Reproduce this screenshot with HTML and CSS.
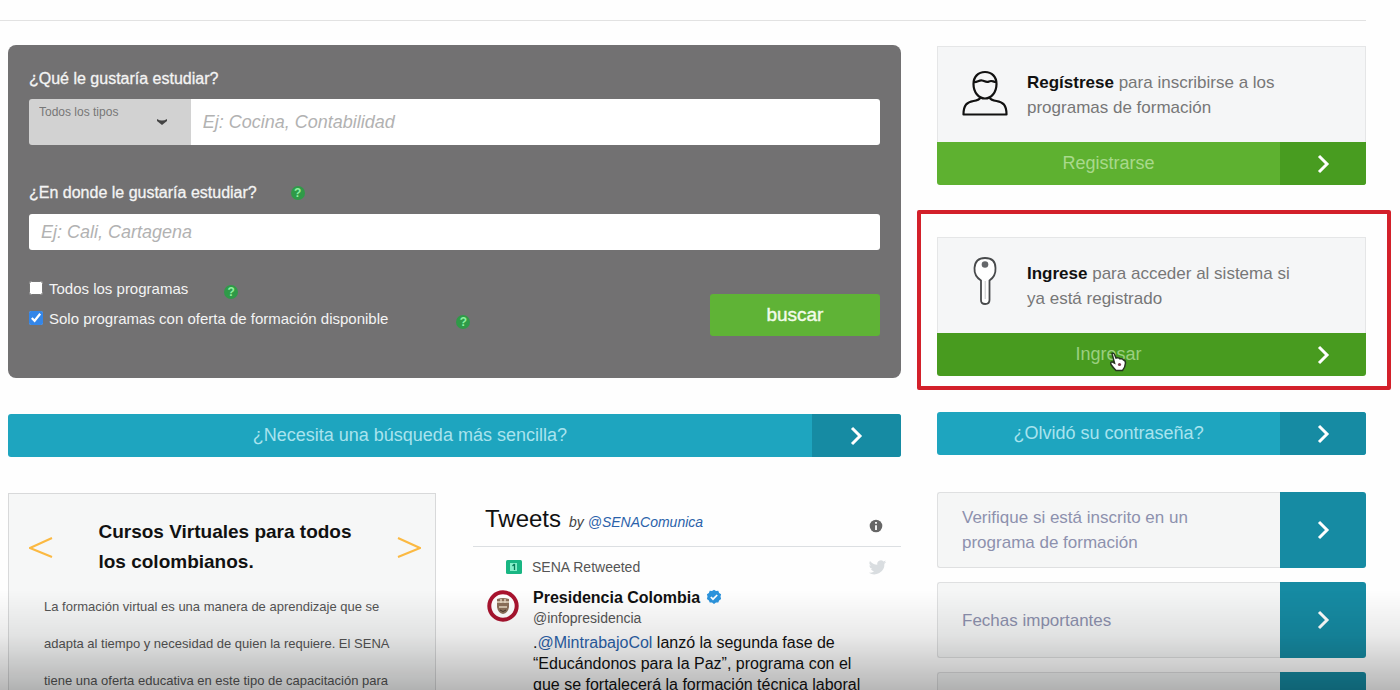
FILE: index.html
```html
<!DOCTYPE html>
<html lang="es">
<head>
<meta charset="utf-8">
<meta name="viewport" content="width=device-width, initial-scale=1">
<title>SENA Sofia Plus</title>
<link rel="stylesheet" href="styles.css">
</head>
<body>
<svg class="defs" aria-hidden="true"><symbol id="chev" viewBox="0 0 16 22"><path d="M4 3 L12 11 L4 19" fill="none" stroke="currentColor" stroke-width="3"/></symbol></svg>
<header class="top"></header>
<main class="layout">
  <div class="main">
    <form class="search">
      <label class="title" for="que">¿Qué le gustaría estudiar?</label>
      <div class="combo">
        <span class="picker">
          <select aria-label="Tipo de programa"><option>Todos los tipos</option></select>
          <svg class="caret" viewBox="0 0 12 8"><path d="M1 1 Q6 4 11 1 L11 3 L6 7 L1 3Z" fill="#444"/></svg>
        </span>
        <input class="field" id="que" type="text" placeholder="Ej: Cocina, Contabilidad">
      </div>
      <div class="title-row"><label class="title" for="donde">¿En donde le gustaría estudiar?</label><button class="help" type="button">?</button></div>
      <input class="field place" id="donde" type="text" placeholder="Ej: Cali, Cartagena">
      <div class="bottom">
        <div class="checks">
          <div class="check"><input type="checkbox" id="todos"><label for="todos">Todos los programas</label><button class="help" type="button">?</button></div>
          <div class="check far"><input type="checkbox" id="solo" checked><label for="solo">Solo programas con oferta de formación disponible</label><button class="help" type="button">?</button></div>
        </div>
        <button class="submit" type="submit">buscar</button>
      </div>
    </form>
    <a class="bar teal wide" href="#"><span class="bar-text">¿Necesita una búsqueda más sencilla?</span><span class="bar-arrow"><svg class="chev"><use href="#chev"/></svg></span></a>
    <div class="split">
      <section class="course">
        <div class="course-head">
          <button class="nav" type="button" aria-label="Anterior"><svg viewBox="0 0 24 22"><path d="M23 1 L1 11 L23 20" fill="none" stroke="#fbb942" stroke-width="2"/></svg></button>
          <h2>Cursos Virtuales para todos<br>los colombianos.</h2>
          <button class="nav" type="button" aria-label="Siguiente"><svg viewBox="0 0 24 22"><path d="M1 1 L23 11 L1 20" fill="none" stroke="#fbb942" stroke-width="2"/></svg></button>
        </div>
        <p>La formación virtual es una manera de aprendizaje que se<br>adapta al tiempo y necesidad de quien la requiere. El SENA<br>tiene una oferta educativa en este tipo de capacitación para</p>
      </section>
      <section class="tweets">
        <div class="tweets-head"><h2>Tweets</h2><span class="by">by <a href="#">@SENAComunica</a></span>
          <svg class="info" viewBox="0 0 14 14"><circle cx="7" cy="7" r="6.3" fill="#666"/><path d="M7 6.2V11M7 3V4.8" stroke="#fff" stroke-width="1.8"/></svg></div>
        <div class="retweet">
          <svg class="rt" viewBox="0 0 16 14"><rect width="16" height="14" rx="1.5" fill="#19b683"/><path d="M4 3h7v8H4z" fill="#85efc9"/><path d="M8.500 4v6M6.500 6l2-2" stroke="#087a58" stroke-width="1.3" fill="none"/></svg>
          <span>SENA Retweeted</span>
          <svg class="bird" viewBox="0 0 24 24"><path fill="#d9dde0" d="M23 5a9 9 0 0 1-2.6.7 4.5 4.5 0 0 0 2-2.5 9 9 0 0 1-2.9 1.1 4.5 4.5 0 0 0-7.7 4.1A12.8 12.8 0 0 1 2.5 3.7a4.5 4.5 0 0 0 1.4 6 4.5 4.5 0 0 1-2-.6 4.5 4.5 0 0 0 3.6 4.5 4.5 4.5 0 0 1-2 .1 4.5 4.5 0 0 0 4.2 3.1A9 9 0 0 1 1 18.700a12.8 12.8 0 0 0 19.700-11.4A9 9 0 0 0 23 5z"/></svg>
        </div>
        <article class="tweet">
          <svg class="avatar" viewBox="0 0 32 32"><circle cx="16" cy="16" r="13.7" fill="#fff" stroke="#a9142f" stroke-width="4"/><path d="M10 9q6-2 12 0v8q-1 6-6 7q-5-1-6-7z" fill="#8b705a"/><path d="M10 12h12M12 17h8M14 9v4M18 9v4" stroke="#e8d9c4" stroke-width="1.4"/><path d="M13 20q3 3 6 0" stroke="#45352b" fill="none"/></svg>
          <div>
            <div class="name"><strong>Presidencia Colombia</strong><svg class="verified" viewBox="0 0 16 16"><path d="M8 .8l2 1.2 2.3-.2.8 2.1 2 1.3-.6 2.4.6 2.5-2 1.3-.8 2.2-2.3-.2-2 1.500-2-1.500-2.300.2-.8-2.200-2-1.300.6-2.500L.9 5.200l2-1.300.8-2.100L6 2z" fill="#2c94dd"/><path d="M4.8 8l2.2 2.2 4.2-4.2" fill="none" stroke="#fff" stroke-width="1.7"/></svg></div>
            <div class="handle">@infopresidencia</div>
            <p>.<a href="#">@MintrabajoCol</a> lanzó la segunda fase de<br>“Educándonos para la Paz”, programa con el<br>que se fortalecerá la formación técnica laboral</p>
          </div>
        </article>
      </section>
    </div>
  </div>
  <aside class="side">
    <section class="access">
      <div class="access-body">
        <svg class="glyph" viewBox="0 0 46 48"><g fill="none" stroke="#111" stroke-width="2.2" stroke-linejoin="round"><path d="M23 2c-7 0-11.500 5-11.500 12 0 8 5 14.500 11.500 14.500S34.500 22 34.500 14C34.500 7 30 2 23 2z"/><path d="M12 12c3 .5 5-2 8-1.500 3 .5 4 2.500 7 1 3-1.500 4 .5 7 .5"/><path d="M18.500 27.500c-1 2-3 3-7 3.500C5 32 1.500 35 1.500 44.500h43C44.500 35 41 32 34.500 31c-4-.5-6-1.500-7-3.500"/></g></svg>
        <p><strong>Regístrese</strong> para inscribirse a los<br>programas de formación</p>
      </div>
      <a class="bar green" href="#"><span class="bar-text">Registrarse</span><span class="bar-arrow"><svg class="chev"><use href="#chev"/></svg></span></a>
    </section>
    <section class="access marked">
      <div class="access-body">
        <svg class="glyph" viewBox="0 0 46 48"><path d="M19 23.500Q12 19 12.500 11C13 4 17 1 23 1s10.500 3 10.500 10Q34 19 27.500 23.500V43q0 4-4.300 4T19 43z" fill="#fff" stroke="#484a4c" stroke-width="1.8"/><path d="M23.200 24v18" stroke="#c5c7c9"/><circle cx="23" cy="7.500" r="3.300" fill="#65676a"/></svg>
        <p><strong>Ingrese</strong> para acceder al sistema si<br>ya está registrado</p>
      </div>
      <a class="bar green active" href="#"><span class="bar-text">Ingresar</span><span class="bar-arrow"><svg class="chev"><use href="#chev"/></svg></span></a>
      <svg class="pointer" viewBox="0 0 18 20"><path d="M3 1.500q2-1 3 2l1 2.500q3-1 4 .8 3-.5 3.500 1.200 2 .2 2 3-.3 4.500-3 7.500H7q-3-3-5-6-1-3 1.500-2.500l2 1z" fill="#fff" stroke="#26351f" stroke-width="1.5"/><circle cx="10.500" cy="12.500" r="1.600" fill="#7c4050"/></svg>
    </section>
    <a class="bar teal forgot" href="#"><span class="bar-text">¿Olvidó su contraseña?</span><span class="bar-arrow"><svg class="chev"><use href="#chev"/></svg></span></a>
    <nav class="links">
      <a class="link" href="#"><span class="link-text">Verifique si está inscrito en un<br>programa de formación</span><span class="link-arrow"><svg class="chev"><use href="#chev"/></svg></span></a>
      <a class="link" href="#"><span class="link-text">Fechas importantes</span><span class="link-arrow"><svg class="chev"><use href="#chev"/></svg></span></a>
      <a class="link" href="#" aria-label="Más información"><span class="link-text"></span><span class="link-arrow"></span></a>
    </nav>
  </aside>
</main>
<div class="shade"></div>
</body>
</html>
```
FILE: styles.css
```css
* { box-sizing: border-box; }
body {
  margin: 0;
  height: 100vh;
  overflow: hidden;
  padding: 0 34px 0 8px;
  background: #fefefe;
  font-family: "Liberation Sans", Arial, sans-serif;
  color: #111;
}
a { text-decoration: none; }
p, h2 { margin: 0; }
button, input, select { font: inherit; margin: 0; }
button { border: 0; padding: 0; background: none; cursor: pointer; }
svg { display: block; flex: none; }
.defs { position: absolute; width: 0; height: 0; }
.top { height: 21px; margin-left: -8px; border-bottom: 1px solid #e2e2e2; }
.layout { display: grid; grid-template-columns: 893fr 429fr; gap: 36px; padding-top: 24px; }

.search { background: #727172; border-radius: 8px; padding: 22px 21px 42px; color: #f4f4f4; }
.title { display: block; font-size: 16px; line-height: 24px; -webkit-text-stroke: 0.3px currentColor; }
.combo { display: flex; height: 46px; margin: 8px 0 36px; }
.picker { position: relative; flex: 0 0 19%; }
.picker select {
  appearance: none;
  width: 100%;
  height: 100%;
  border: 0;
  border-radius: 3px 0 0 3px;
  background: #d2d2d2;
  color: #777;
  font-size: 12px;
  padding: 0 30px 20px 10px;
}
.caret { position: absolute; right: 23px; top: 19px; width: 12px; height: 8px; }
.field {
  flex: 1;
  width: 100%;
  min-width: 0;
  border: 0;
  border-radius: 0 3px 3px 0;
  background: #fff;
  padding: 0 12px;
  font-size: 18px;
}
.field::placeholder { color: #b2b2b2; font-style: italic; opacity: 1; }
.place { display: block; height: 36px; border-radius: 3px; margin-top: 9px; }
.title-row { display: flex; align-items: center; gap: 34px; }
.help {
  width: 14px;
  height: 14px;
  border-radius: 50%;
  background: #2f9a48;
  color: #8df0a0;
  font-size: 12px;
  line-height: 14px;
  font-weight: bold;
}
.bottom { display: flex; justify-content: space-between; align-items: flex-start; margin-top: 24px; }
.checks { display: grid; gap: 2px; }
.check { display: flex; align-items: center; height: 28px; font-size: 15px; }
.check input { width: 14px; height: 14px; margin-right: 6px; accent-color: #3486e8; }
.check .help { margin: 8px 0 0 36px; }
.check.far .help { margin-left: 68px; }
.submit {
  width: 20%;
  height: 42px;
  margin-top: 20px;
  border-radius: 3px;
  background: #5fb336;
  color: #f2fbea;
  font-size: 19px;
  -webkit-text-stroke: 0.4px currentColor;
}

.bar { display: flex; height: 43px; border-radius: 3px; overflow: hidden; font-size: 18px; }
.bar-text { flex: 1; display: grid; place-items: center; }
.bar-arrow { flex: 0 0 20%; display: grid; place-items: center; color: #fff; }
.chev { width: 16px; height: 22px; }
.teal { background: #1ea5bf; color: #a9e3ee; }
.teal .bar-arrow { background: #168ba3; }
.wide { margin: 36px 0; }
.wide .bar-arrow { flex-basis: 10%; }
.green { background: #5eb130; color: #a9d98c; border-radius: 0 0 3px 3px; }
.green .bar-arrow { background: #489c20; }
.green.active { background: #489b1f; color: #9bcf80; }
.green.active .bar-arrow { background: none; }

.split { display: grid; grid-template-columns: 1fr 1fr; gap: 37px; }
.course { border: 1px solid #d8d9da; background: #f6f7f7; padding: 23px 14px 40px 20px; min-height: 320px; }
.course-head { display: flex; justify-content: space-between; }
.course-head h2 { font-size: 19px; line-height: 30px; white-space: nowrap; }
.nav { flex: none; width: 24px; padding-top: 1px; }
.nav svg { width: 24px; height: 22px; }
.course p { font-size: 13px; line-height: 37px; color: #555; margin: 11px 0 0 15px; white-space: nowrap; }

.tweets-head { display: flex; align-items: baseline; gap: 8px; height: 54px; padding: 12px 18px 0 12px; border-bottom: 1px solid #dcdfe2; }
.tweets-head h2 { font-size: 24px; line-height: 28px; font-weight: normal; }
.by { font-size: 14px; font-style: italic; color: #444; }
.tweets a { color: #2b62aa; }
.info { width: 14px; height: 14px; margin-left: auto; align-self: center; }
.retweet { display: flex; align-items: center; gap: 10px; height: 38px; padding: 2px 14px 0 33px; font-size: 14px; color: #555; }
.rt { width: 16px; height: 14px; }
.bird { width: 19px; height: 19px; margin-left: auto; }
.tweet { display: grid; grid-template-columns: 32px 1fr; gap: 14px; padding-left: 14px; font-size: 16px; line-height: 21px; }
.avatar { width: 32px; height: 32px; margin-top: 5px; }
.name { display: flex; align-items: center; gap: 6px; height: 24px; }
.verified { width: 16px; height: 16px; }
.handle { font-size: 14px; line-height: 18px; color: #555; margin-bottom: 5px; }
.tweet p { white-space: nowrap; }

.side { padding-top: 1px; }
.access { position: relative; margin-bottom: 52px; }
.access-body { display: flex; gap: 19px; height: 96px; padding: 23px 24px 0; background: #f5f6f7; border: 1px solid #e5e6e7; border-bottom: 0; font-size: 17px; line-height: 25px; color: #777; }
.access-body strong { color: #111; }
.glyph { width: 46px; height: 48px; }
.access-body p { white-space: nowrap; }
.marked { margin-bottom: 36px; }
.marked .glyph { margin-top: -4px; }
.marked::after { content: ""; position: absolute; inset: -27px -25px -14px -20px; border: 4px solid #d3202a; border-radius: 2px; pointer-events: none; }
.pointer { position: absolute; left: 40%; bottom: 4px; width: 18px; height: 20px; }
.forgot { margin-bottom: 37px; }
.links { display: grid; gap: 14px; }
.link { display: flex; height: 76px; font-size: 17px; line-height: 25px; color: #8d91ae; }
.link-text { flex: 1; display: flex; align-items: center; padding-left: 24px; background: #f5f6f6; border: 1px solid #dfe0e1; border-right: 0; border-radius: 3px 0 0 3px; }
.link-arrow { flex: 0 0 20%; display: grid; place-items: center; background: #168ba3; border-radius: 0 3px 3px 0; color: #fff; }
.shade { position: fixed; inset: auto 0 0; height: 100px; background: linear-gradient(transparent, rgba(0, 0, 0, 0.08) 45%, rgba(0, 0, 0, 0.28)); pointer-events: none; }
```
